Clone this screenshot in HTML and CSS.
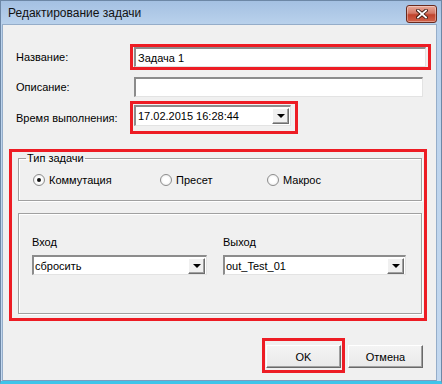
FILE: index.html
```html
<!DOCTYPE html>
<html lang="ru">

<head>
  <meta charset="UTF-8">
  <meta name="viewport" content="width=device-width, initial-scale=1.0">
  <title>Редактирование задачи</title>
  <link rel="stylesheet" href="styles.css">
</head>

<body>

  <div class="window">
    <div class="titlebar">
      <span class="titlebar__text">Редактирование задачи</span>
      <button class="titlebar__close" type="button" aria-label="Закрыть">
        <svg width="12" height="10" viewBox="0 0 12 10">
          <path d="M2 1.5L10 8.5M10 1.5L2 8.5" stroke="#3b1810" stroke-width="3.6" stroke-linecap="square" />
          <path d="M2 1.5L10 8.5M10 1.5L2 8.5" stroke="#fff" stroke-width="1.8" stroke-linecap="square" />
        </svg>
      </button>
    </div>

    <div class="client">
      <div class="form">
        <div class="row row--name">
          <span class="row__label">Название:</span>
          <div class="mark mark--name">
            <div class="field field--name">Задача 1</div>
          </div>
        </div>

        <div class="row row--desc">
          <span class="row__label">Описание:</span>
          <div class="field field--desc"></div>
        </div>

        <div class="row row--time">
          <span class="row__label">Время выполнения:</span>
          <div class="mark mark--time">
            <div class="field field--time">
              <span class="field__value">17.02.2015 16:28:44</span>
              <span class="drop"><span class="drop__arrow"></span></span>
            </div>
          </div>
        </div>
      </div>

      <div class="mark mark--group">
        <fieldset class="type">
          <legend class="type__title">Тип задачи</legend>
          <div class="type__list">
            <label class="radio radio--first"><span class="radio__dot radio__dot--on"></span>Коммутация</label>
            <label class="radio radio--second"><span class="radio__dot"></span>Пресет</label>
            <label class="radio"><span class="radio__dot"></span>Макрос</label>
          </div>
        </fieldset>

        <div class="panel">
          <div class="panel__col panel__col--in">
            <span class="panel__label">Вход</span>
            <div class="field field--combo">
              <span class="field__value">сбросить</span>
              <span class="drop"><span class="drop__arrow"></span></span>
            </div>
          </div>
          <div class="panel__col panel__col--out">
            <span class="panel__label">Выход</span>
            <div class="field field--combo">
              <span class="field__value">out_Test_01</span>
              <span class="drop"><span class="drop__arrow"></span></span>
            </div>
          </div>
        </div>
      </div>

      <div class="actions">
        <div class="mark mark--ok">
          <button class="button" type="button">OK</button>
        </div>
        <button class="button button--cancel" type="button">Отмена</button>
      </div>
    </div>
  </div>

</body>

</html>
```

FILE: styles.css
```css
*,
*:after,
*:before {
  margin: 0;
  padding: 0;
  box-sizing: border-box;
}

body {
  width: 442px;
  height: 384px;
  overflow: hidden;
  font-family: "Liberation Sans", Arial, sans-serif;
  font-size: 11px;
  color: #000;
}

.window {
  height: 384px;
  display: flex;
  flex-direction: column;
  background: linear-gradient(#a4c0e2, #bad2ec 24px, #c3d8ef);
  border: 1px solid #6d87a6;
  border-bottom: 3px solid #3fc4ea;
}

.titlebar {
  height: 23px;
  display: flex;
  align-items: center;
  padding: 0 4px 0 7px;
}

.titlebar__text {
  flex: 1;
  font-size: 12px;
  color: #111;
}

.titlebar__close {
  width: 31px;
  height: 18px;
  margin-top: 3px;
  display: flex;
  align-items: center;
  justify-content: center;
  border: 1px solid #6a2a1e;
  border-radius: 3px;
  background: linear-gradient(#e8a898, #d47866 45%, #c0432c 55%, #d2634b);
  box-shadow: inset 0 0 0 1px rgba(255, 255, 255, .35);
}

.client {
  flex: 1;
  margin: 0 4px 0 1px;
  background: #f0f0f0;
  border: 1px solid #95adc9;
  border-bottom-color: #7e9bbd;
}

.form {
  padding: 19px 0 0 13px;
}

.row {
  display: flex;
  align-items: center;
}

.row__label {
  width: 114px;
}

.row--desc {
  margin-top: 7px;
}

.row--time {
  margin-top: 4px;
}

.mark {
  border: 3px solid #ed1c24;
}

.mark--name {
  padding: 0 2px 0 1px;
}

.mark--time {
  padding: 1px 4px 5px 1px;
}

.field {
  height: 20px;
  display: flex;
  align-items: center;
  background: #fff;
  border: 1px solid #e3e3e3;
  border-top: 2px solid #8c8c8c;
  border-left: 2px solid #8c8c8c;
  padding-left: 1px;
}

.field--name {
  width: 292px;
  padding-left: 2px;
}

.field--desc {
  width: 289px;
  margin-left: 4px;
}

.field--time {
  width: 157px;
  height: 21px;
  padding-left: 2px;
}

.field__value {
  flex: 1;
  white-space: nowrap;
}

.drop {
  width: 17px;
  height: 16px;
  margin-right: 1px;
  display: flex;
  align-items: center;
  justify-content: center;
  background: #f0f0f0;
  border: 1px solid #fff;
  border-right-color: #6e6e6e;
  border-bottom-color: #6e6e6e;
  box-shadow: inset -1px -1px 0 #a0a0a0;
}

.drop__arrow {
  width: 0;
  height: 0;
  border-left: 4px solid transparent;
  border-right: 4px solid transparent;
  border-top: 4px solid #000;
}

.mark--group {
  width: 418px;
  height: 172px;
  margin: 15px 0 0 6px;
  padding: 0 2px 0 6px;
}

.type {
  border: 1px solid #a0a0a0;
  box-shadow: inset 1px 1px 0 #fff, 1px 1px 0 #fff;
  padding: 9px 0 14px 14px;
}

.type__title {
  margin-left: -7px;
  padding: 0 1px 0 1px;
  line-height: 12px;
}

.type__list {
  display: flex;
  align-items: center;
}

.radio {
  display: flex;
  align-items: center;
  height: 13px;
}

.radio--first {
  width: 127px;
}

.radio--second {
  width: 107px;
}

.radio__dot {
  width: 12px;
  height: 12px;
  margin-right: 4px;
  border-radius: 50%;
  border: 1px solid #8d8d8d;
  background: radial-gradient(circle, #fff 40%, #e2e2e2);
  display: flex;
  align-items: center;
  justify-content: center;
}

.radio__dot--on:after {
  content: "";
  width: 4px;
  height: 4px;
  border-radius: 50%;
  background: #111;
}

.panel {
  height: 101px;
  margin-top: 12px;
  border: 1px solid #a0a0a0;
  box-shadow: inset 1px 1px 0 #fff, 1px 1px 0 #fff;
  padding: 22px 0 0 13px;
  display: flex;
  gap: 16px;
}

.panel__col {
  display: flex;
  flex-direction: column;
  gap: 6px;
}

.panel__col--in {
  width: 175px;
}

.panel__col--out {
  width: 183px;
}

.panel__label {
  line-height: 13px;
}

.actions {
  display: flex;
  justify-content: flex-end;
  align-items: flex-start;
  gap: 3px;
  margin: 17px 13px 0 0;
}

.mark--ok {
  padding: 4px 1px 2px 1px;
}

.button {
  width: 75px;
  height: 23px;
  font-family: inherit;
  font-size: 11px;
  color: #000;
  background: linear-gradient(#f4f4f4, #e9e9e9);
  border: 1px solid #fff;
  border-right-color: #696969;
  border-bottom-color: #696969;
  box-shadow: inset -1px -1px 0 #a0a0a0;
}

.button--cancel {
  margin-top: 7px;
}
```
